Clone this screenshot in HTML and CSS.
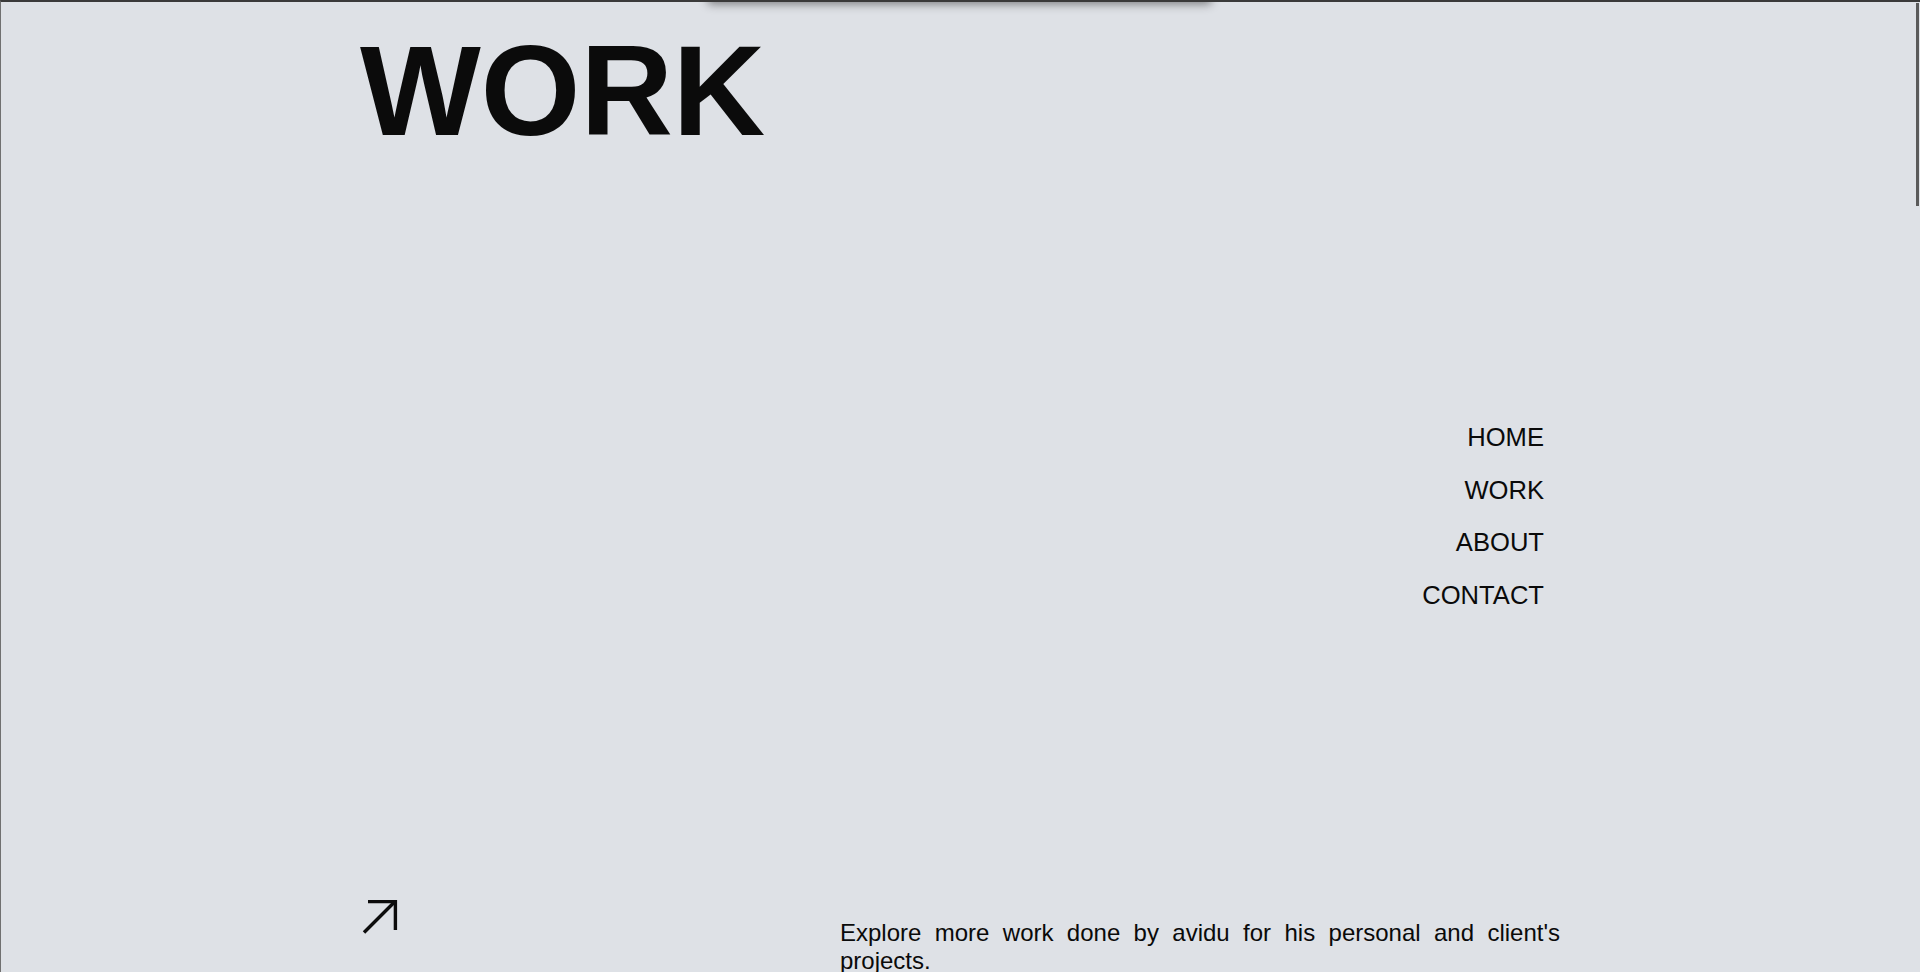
FILE: index.html
```html
<!DOCTYPE html>
<html lang="en">
<head>
<meta charset="utf-8">
<title>Work</title>
<link rel="stylesheet" href="styles.css">
</head>
<body>
<div class="top-drawer"></div>
<main class="page">
  <header class="hero">
    <h1 class="hero-title">WORK</h1>
    <nav class="menu">
      <a class="menu-link" href="#">HOME</a>
      <a class="menu-link" href="#">WORK</a>
      <a class="menu-link" href="#">ABOUT</a>
      <a class="menu-link" href="#">CONTACT</a>
    </nav>
    <div class="hero-foot">
      <svg class="hero-arrow" width="40" height="40" viewBox="0 0 40 40" aria-hidden="true">
        <path d="M4 35.5 L34 5.5" fill="none" stroke="#0d0d0d" stroke-width="3.4"/>
        <path d="M8 4.6 H35.4 V33" fill="none" stroke="#0d0d0d" stroke-width="3.4"/>
      </svg>
      <p class="hero-text">Explore more work done by avidu for his personal and client's projects.</p>
    </div>
  </header>
  <section class="work-list"></section>
</main>
<div class="frame"></div>
<div class="scroll-thumb"></div>
</body>
</html>
```

FILE: styles.css
```css
html {
  background: #dee1e6;
}
html::-webkit-scrollbar {
  display: none;
}
body {
  margin: 0;
  font-family: "Liberation Sans", Arial, sans-serif;
  color: #0c0c0c;
}
.page {
  width: 1200px;
  margin-left: 360px;
}
.hero {
  display: flex;
  flex-direction: column;
  padding-top: 27px;
}
.hero-title {
  margin: 0;
  font-size: 128px;
  line-height: 128px;
  font-weight: 700;
  color: #0b0b0b;
}
.menu {
  display: flex;
  flex-direction: column;
  align-items: flex-end;
  margin-top: 256px;
  margin-right: 16px;
}
.menu-link {
  font-size: 25.6px;
  line-height: 52.5px;
  color: #0a0a0a;
  text-decoration: none;
}
.hero-foot {
  display: grid;
  grid-template-columns: 480px 720px;
  margin-top: 276px;
}
.hero-arrow {
  display: block;
}
.hero-text {
  margin: 22px 0 0;
  font-size: 24px;
  line-height: 27.6px;
  text-align: justify;
  color: #0a0a0a;
}
.work-list {
  height: 3656px;
}
.top-drawer {
  position: fixed;
  top: -40px;
  left: 708px;
  width: 503px;
  height: 42px;
  background: #d4d7db;
  box-shadow: 0 2px 9px rgba(0, 0, 0, 0.45);
  z-index: 5;
}
.frame {
  position: fixed;
  inset: 0;
  border-top: 2px solid #3a3a3a;
  border-left: 1px solid #707070;
  pointer-events: none;
  z-index: 10;
}
.scroll-thumb {
  position: fixed;
  top: 3px;
  right: 1px;
  width: 3px;
  height: 203px;
  background: #5a5a5a;
  z-index: 11;
}
```
